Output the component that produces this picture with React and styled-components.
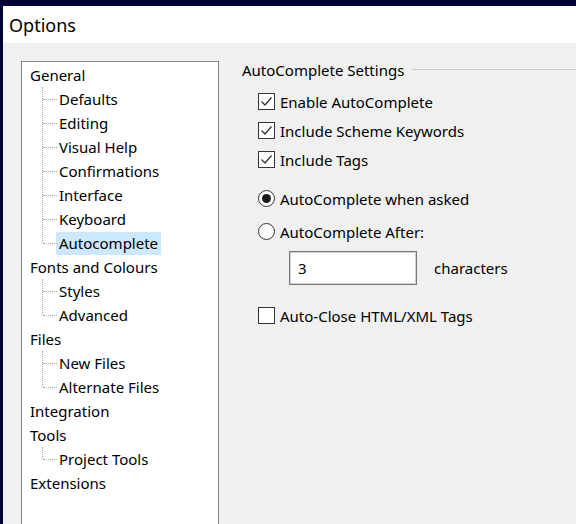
import React from 'react';
import styled, { createGlobalStyle } from 'styled-components';

const GlobalStyle = createGlobalStyle`
  html, body {
    margin: 0;
    padding: 0;
    background: #000033;
  }
  * { box-sizing: border-box; }
`;

const Screen = styled.div`
  width: 576px;
  height: 524px;
  overflow: hidden;
  padding: 6px 0 0 3px;
  background: #000033;
  font-family: "Noto Sans", "Open Sans", sans-serif;
  font-size: 15px;
  color: #000;
`;

const Window = styled.div`
  height: 100%;
  display: flex;
  flex-direction: column;
  background: #f0f0f0;
`;

const TitleBar = styled.div`
  height: 37px;
  flex: none;
  display: flex;
  align-items: center;
  padding-left: 6px;
  background: #fff;
  font-size: 18px;
`;

const Body = styled.div`
  flex: 1;
  display: flex;
  padding: 18px 0 0 18px;
  min-height: 0;
`;

const TreePanel = styled.div`
  width: 198px;
  flex: none;
  height: 480px;
  padding-top: 1px;
  background: #fff;
  border: 1px solid #828790;
`;

const TreeRow = styled.div`
  position: relative;
  height: 24px;
  display: flex;
  align-items: center;
  padding-left: ${p => (p.$child ? '37px' : '8px')};
  white-space: nowrap;

  ${p => p.$child && `
    &::before {
      content: '';
      position: absolute;
      left: 21px;
      top: 12px;
      width: 14px;
      border-top: 1px dotted #a8a8a8;
    }
  `}
`;

const ChildGroup = styled.div`
  position: relative;

  &::before {
    content: '';
    position: absolute;
    left: 20px;
    top: 0;
    bottom: 12px;
    border-left: 1px dotted #a8a8a8;
  }
`;

const Label = styled.span`
  display: inline-flex;
  align-items: center;
  height: 23px;
  padding: 0 3px;
  margin-left: -3px;
  background: ${p => (p.$selected ? '#cce8ff' : 'transparent')};
`;

const RightPane = styled.div`
  flex: 1;
  padding-left: 23px;
`;

const GroupTitle = styled.div`
  height: 20px;
  margin-top: -1px;
  display: flex;
  align-items: center;
  gap: 8px;

  &::after {
    content: '';
    flex: 1;
    border-top: 1px solid #c8c8c8;
    margin-top: -2px;
  }
`;

const GroupBody = styled.div`
  padding-left: 16px;
  padding-top: 7px;
`;

const OptionRow = styled.label`
  height: 29px;
  display: flex;
  align-items: center;
  gap: 5px;
  margin-top: ${p => p.$gap || 0}px;
`;

const Box = styled.span`
  width: 17px;
  height: 17px;
  flex: none;
  border: 1px solid #333;
  background: #fff;
  display: flex;
  align-items: center;
  justify-content: center;
`;

const Round = styled.span`
  width: 17px;
  height: 17px;
  flex: none;
  border: 1px solid #333;
  border-radius: 50%;
  background: #fff;
  display: flex;
  align-items: center;
  justify-content: center;

  &::after {
    content: '';
    width: 9px;
    height: 9px;
    border-radius: 50%;
    background: ${p => (p.$on ? '#1a1a1a' : 'transparent')};
  }
`;

const CountRow = styled.div`
  display: flex;
  align-items: center;
  margin-top: 5px;
  padding-left: 31px;
  gap: 17px;
`;

const CountInput = styled.div`
  width: 128px;
  height: 34px;
  border: 1px solid #7a7a7a;
  box-shadow: inset 0 0 0 1px #d0d0d0;
  background: #fff;
  display: flex;
  align-items: center;
  padding-left: 8px;
`;

const Check = ({ checked, children }) => (
  <>
    <Box>
      {checked && (
        <svg width="15" height="15" viewBox="0 0 15 15">
          <polyline points="2.5,7.5 6,11 12.5,3.5" fill="none" stroke="#333" strokeWidth="1.3" />
        </svg>
      )}
    </Box>
    <span>{children}</span>
  </>
);

const tree = [
  { name: 'General', children: ['Defaults', 'Editing', 'Visual Help', 'Confirmations', 'Interface', 'Keyboard', 'Autocomplete'] },
  { name: 'Fonts and Colours', children: ['Styles', 'Advanced'] },
  { name: 'Files', children: ['New Files', 'Alternate Files'] },
  { name: 'Integration', children: [] },
  { name: 'Tools', children: ['Project Tools'] },
  { name: 'Extensions', children: [] },
];

export default function App() {
  return (
    <>
      <GlobalStyle />
      <Screen>
        <Window>
          <TitleBar>Options</TitleBar>
          <Body>
            <TreePanel>
              {tree.map(node => (
                <React.Fragment key={node.name}>
                  <TreeRow>{node.name}</TreeRow>
                  {node.children.length > 0 && (
                    <ChildGroup>
                      {node.children.map(c => (
                        <TreeRow $child key={c}>
                          <Label $selected={c === 'Autocomplete'}>{c}</Label>
                        </TreeRow>
                      ))}
                    </ChildGroup>
                  )}
                </React.Fragment>
              ))}
            </TreePanel>
            <RightPane>
              <GroupTitle>AutoComplete Settings</GroupTitle>
              <GroupBody>
                <OptionRow><Check checked>Enable AutoComplete</Check></OptionRow>
                <OptionRow><Check checked>Include Scheme Keywords</Check></OptionRow>
                <OptionRow><Check checked>Include Tags</Check></OptionRow>
                <OptionRow $gap={10}><Round $on /><span>AutoComplete when asked</span></OptionRow>
                <OptionRow $gap={4}><Round /><span>AutoComplete After:</span></OptionRow>
                <CountRow>
                  <CountInput>3</CountInput>
                  <span>characters</span>
                </CountRow>
                <OptionRow $gap={16}><Check>Auto-Close HTML/XML Tags</Check></OptionRow>
              </GroupBody>
            </RightPane>
          </Body>
        </Window>
      </Screen>
    </>
  );
}
